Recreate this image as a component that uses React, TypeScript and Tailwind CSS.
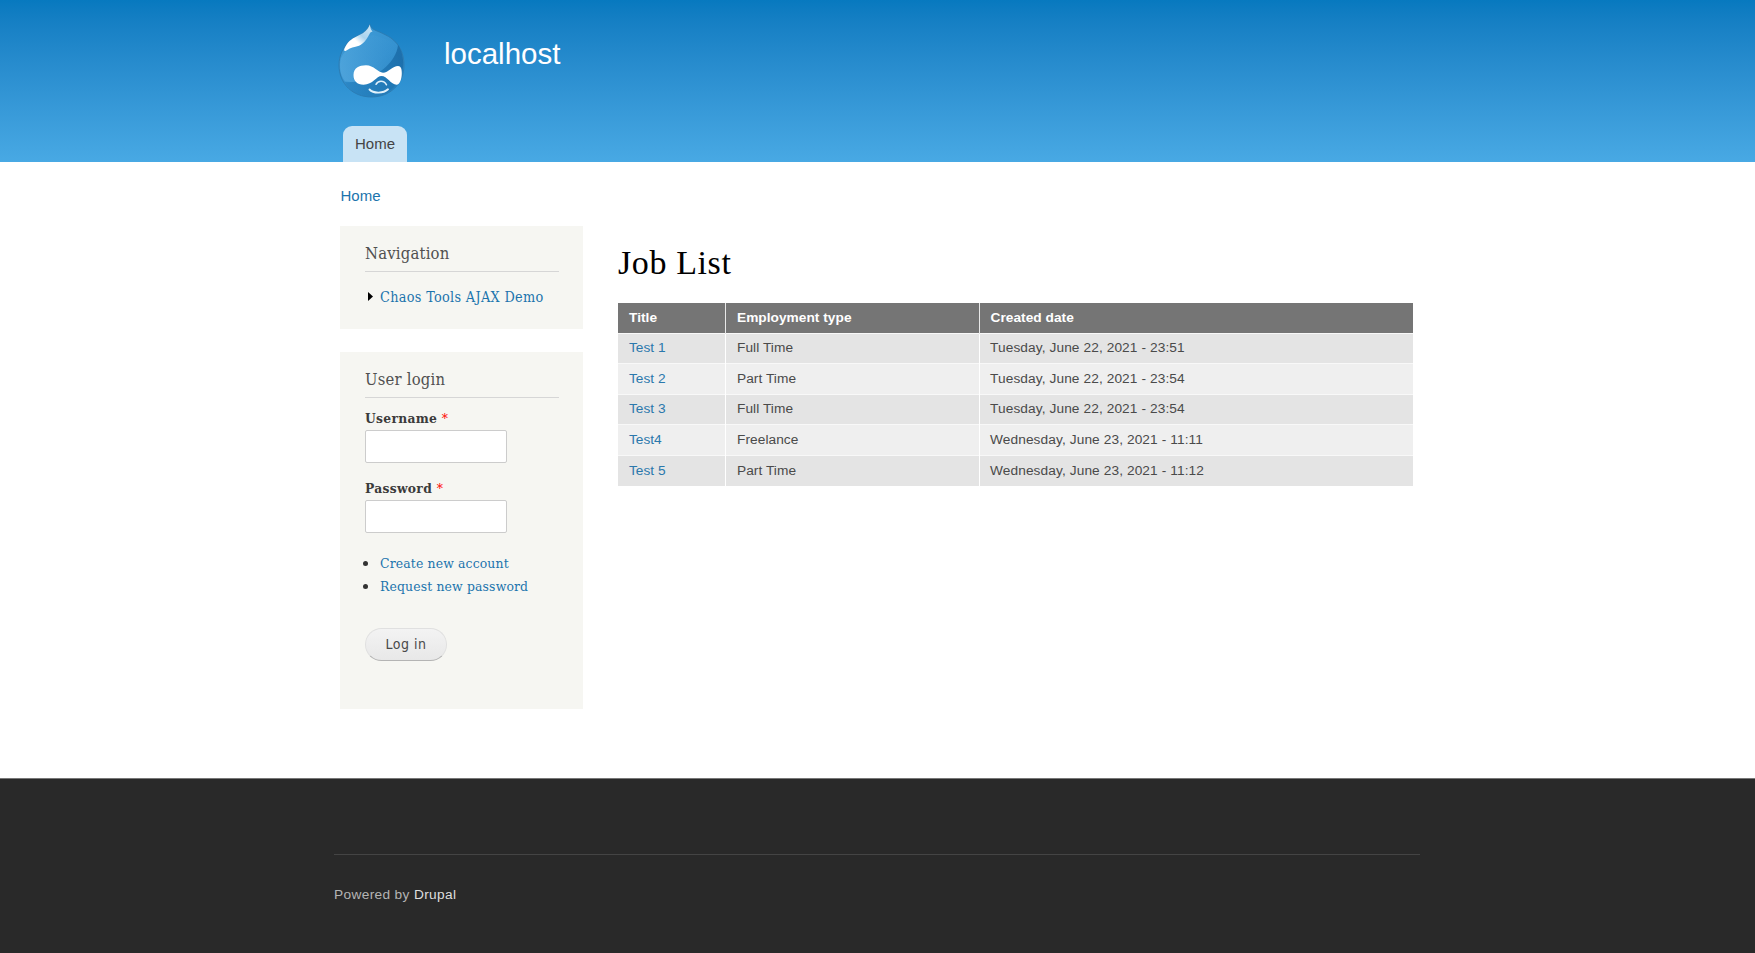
import type { ReactNode } from "react";

const jobs = [
  ["Test 1", "Full Time", "Tuesday, June 22, 2021 - 23:51"],
  ["Test 2", "Part Time", "Tuesday, June 22, 2021 - 23:54"],
  ["Test 3", "Full Time", "Tuesday, June 22, 2021 - 23:54"],
  ["Test4", "Freelance", "Wednesday, June 23, 2021 - 11:11"],
  ["Test 5", "Part Time", "Wednesday, June 23, 2021 - 11:12"],
];

function Logo() {
  return (
    <svg width="68" height="76" viewBox="0 0 68 76" className="block">
      <defs>
        <linearGradient id="drop" x1="0.2" y1="0.1" x2="0.8" y2="1">
          <stop offset="0" stopColor="#3f9bd6" />
          <stop offset="0.5" stopColor="#3390cf" />
          <stop offset="1" stopColor="#2380bf" />
        </linearGradient>
        <linearGradient id="shade" x1="0.1" y1="1" x2="1" y2="0.3">
          <stop offset="0" stopColor="#2580be" stopOpacity="0.6" />
          <stop offset="1" stopColor="#1969a5" />
        </linearGradient>
        <linearGradient id="glow" x1="0" y1="0.7" x2="1" y2="0.2">
          <stop offset="0" stopColor="#6db9e8" stopOpacity="0.8" />
          <stop offset="1" stopColor="#4aa0d8" stopOpacity="0.1" />
        </linearGradient>
        <linearGradient id="shine" x1="1" y1="0" x2="0" y2="1">
          <stop offset="0" stopColor="#e2f2fb" stopOpacity="0.9" />
          <stop offset="0.4" stopColor="#cfe8f7" stopOpacity="0.75" />
          <stop offset="0.6" stopColor="#fff" />
          <stop offset="1" stopColor="#fff" />
        </linearGradient>
      </defs>
      <path d="M31.8 0C32.5 4 36 6 41.5 8C46 10 50 12 53 14C61 20 66 29 66 41C66 60 52 73 33.5 73C15 73 1 60 1 41C1 32 5 23 11.5 17C16 13 20 12 24.8 9C29 6.500 31 3 31.8 0Z" fill="url(#drop)" stroke="#2c7bb0" strokeWidth="0.9" />
      <path d="M60 21C66 29 68 47 60 58C53 69 42 73 33 73C22 73 12 68 6.500 58C22 60 38 52 48 42.700C54 37 59 30 60 21Z" fill="url(#shade)" opacity="0.8" />
      <path d="M3 34C8 22 24 14 35 11C49 15 60 20 60 21C59 30 54 37 48 42.700C38 52 22 60 7 57.500C2 51 1 42 3 34Z" fill="url(#glow)" opacity="0.5" />
      <path d="M31.800 0.500C32.300 4 33 6 34.500 7.500C32.500 8 32 9 31.500 10C29.500 14 27.500 17 24.800 19.300C22 21.500 20 22.300 17.500 22.800C13 23.500 10 25.500 8 26.700C6 27.600 5.800 26 6.500 24.500C8 21 9.500 19 11.500 17C16 13 20 12 24.800 9.200C29 6.500 31 3 31.800 0.500Z" fill="url(#shine)" />
      <path d="M15.500 51C15.500 44 21 41.300 28 41.300C36 41.300 40 48.700 45 48.700C50 48.700 55 42 60 42C63 42 63.800 45 63.800 49C63.800 55 62 60.700 58.500 60.700C53 60.700 49 52 43.500 52C38.500 52 35 60.700 25.500 60.700C19 60.700 15.500 57 15.500 51Z" fill="#fff" />
      <path d="M38 60.300C40 56.200 46 56 48.500 60.800" fill="none" stroke="#e1f1fb" strokeWidth="1.5" strokeLinecap="round" />
      <path d="M31.500 65.500C35 69.300 45 70 50 65.300" fill="none" stroke="#e1f1fb" strokeWidth="1.900" strokeLinecap="round" />
    </svg>
  );
}

function Block({ title, className, children }: { title: string; className: string; children: ReactNode }) {
  return (
    <section className={`w-[243px] bg-[#f6f6f2] pr-6 pl-[25px] text-[#3b3b3b] ${className}`}>
      <h2 className="h-[45.5px] border-b border-[#d6d6d6] pt-[17px] text-[16.5px] leading-[22px] tracking-[0.2px] text-[#505050]">{title}</h2>
      {children}
    </section>
  );
}

function Field({ label, type }: { label: string; type: string }) {
  return (
    <label className="block h-[70px]">
      <span className="block h-[22px] text-[13.7px] leading-[20px] font-bold tracking-[0.3px]">
        {label} <span className="font-normal text-[#f00]">*</span>
      </span>
      <input type={type} className="block h-[33px] w-[142px] rounded-[2px] border border-[#ccc] bg-white px-1 outline-none" />
    </label>
  );
}

export default function App() {
  return (
    <div className="flex h-[953px] flex-col overflow-hidden bg-white font-['Liberation_Sans',Arial,sans-serif]">
      <header className="h-[162px] bg-linear-to-b from-[#0779bf] to-[#48a9e4]">
        <div className="flex h-[126px] pt-6 pl-[338px]">
          <Logo />
          <a className="ml-[38px] pt-[13px] text-[29.5px] leading-[34px] text-[#fffeff]">localhost</a>
        </div>
        <nav className="flex pl-[343px]">
          <a className="h-9 w-16 rounded-t-[9px] bg-[#c8e3f5] text-center text-[15px] leading-[35px] text-[#444]">Home</a>
        </nav>
      </header>

      <div className="flex h-16 pt-6 pl-[340.5px]">
        <a className="text-[15px] leading-[20px] text-[#1b74ad]">Home</a>
      </div>

      <main className="flex h-[552px] pl-[340px]">
        <aside className="flex w-[243px] flex-col gap-[23px] font-['DejaVu_Serif_Condensed','DejaVu_Serif',Georgia,serif]">
          <Block title="Navigation" className="h-[103px]">
            <div className="flex h-[50px] items-center pl-[3px]">
              <svg width="5" height="9" viewBox="0 0 5 9"><path d="M0 0L5 4.5L0 9Z" fill="#000" /></svg>
              <a className="ml-[7px] text-[14.3px] leading-[22px] tracking-[0.32px] whitespace-nowrap text-[#1b74ad]">Chaos Tools AJAX Demo</a>
            </div>
          </Block>
          <Block title="User login" className="h-[357px]">
            <form className="pt-[10px]">
              <Field label="Username" type="text" />
              <Field label="Password" type="password" />
              <ul className="mt-[4px] text-[13.8px] leading-[23px] tracking-[0.15px] text-[#1b74ad]">
                {["Create new account", "Request new password"].map((t) => (
                  <li key={t} className="flex items-center">
                    <span className="-ml-[2px] mr-3 size-[5px] rounded-full bg-[#333]" />
                    <a className="whitespace-nowrap">{t}</a>
                  </li>
                ))}
              </ul>
              <button type="button" className="mt-[30px] block h-[33px] w-[82px] rounded-full border border-[#e0e0e0] border-b-[#b4b4b4] bg-linear-to-b from-[#f3f3f3] to-[#e8e8e8] font-['DejaVu_Sans_Condensed','Open_Sans',sans-serif] text-[14px] tracking-[0.5px] text-[#4a4a4a]">
                Log in
              </button>
            </form>
          </Block>
        </aside>

        <section className="ml-[35px] w-[795px]">
          <h1 className="h-[77px] pt-[17px] font-['Liberation_Serif',Georgia,serif] text-[34px] leading-[40px] tracking-[0.6px] text-black">Job List</h1>
          <table className="w-full table-fixed border-collapse text-[13.7px] leading-[20px] text-[#4a4a4a]">
            <colgroup>
              <col className="w-[107.5px]" />
              <col className="w-[253.5px]" />
              <col />
            </colgroup>
            <thead>
              <tr className="h-[30px] bg-[#757575] text-left text-white">
                {["Title", "Employment type", "Created date"].map((h) => (
                  <th key={h} className="border-r border-[#e8e8e8] p-0 pl-[11px] font-bold tracking-[0.03px] last:border-r-0">{h}</th>
                ))}
              </tr>
            </thead>
            <tbody>
              {jobs.map(([title, type, date]) => (
                <tr key={title} className="h-[30.5px] border-t border-[#f8f8f8] odd:bg-[#e4e4e4] even:bg-[#efefef]">
                  <td className="border-r border-white p-0 pl-[11px] text-[#2b78ac]">{title}</td>
                  <td className="border-r border-white p-0 pl-[11px] tracking-[0.06px]">{type}</td>
                  <td className="p-0 pl-[10.5px] tracking-[0.1px]">{date}</td>
                </tr>
              ))}
            </tbody>
          </table>
        </section>
      </main>

      <footer className="flex-1 border-t border-[#777] bg-[#292929] pt-[75px] pl-[334px]">
        <div className="w-[1086px] border-t border-[#444] pt-[30px] text-[13.7px] leading-[20px] tracking-[0.35px] text-[#b4b4b4]">
          Powered by <a className="text-[#dfdfdf]">Drupal</a>
        </div>
      </footer>
    </div>
  );
}
